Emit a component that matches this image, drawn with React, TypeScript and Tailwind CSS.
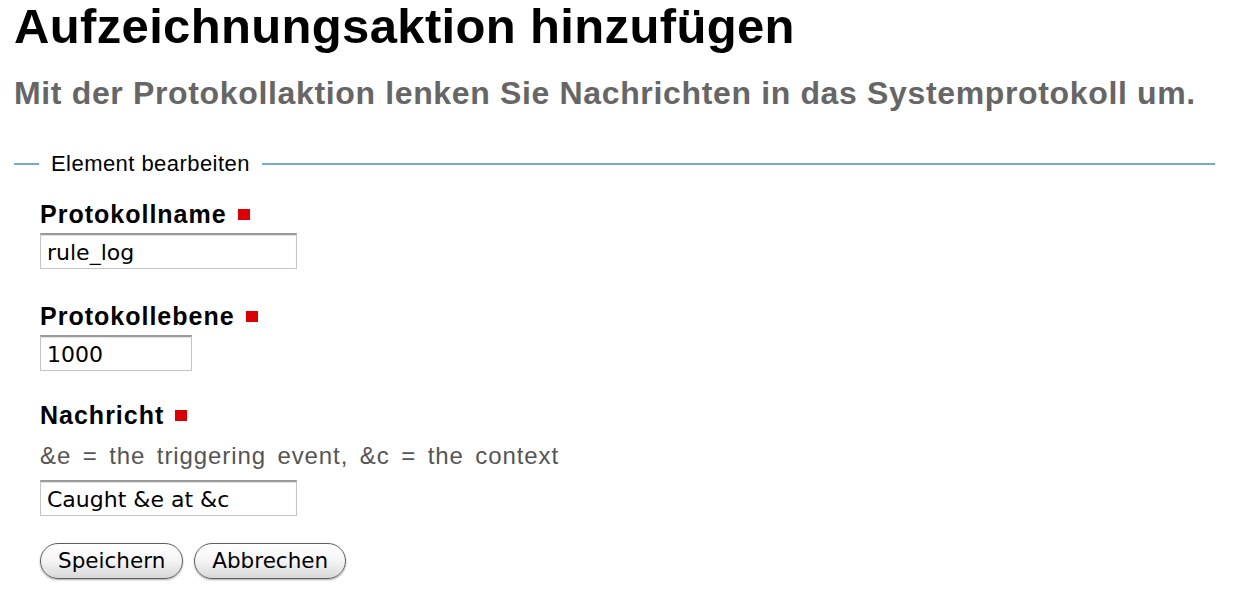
import React, { useState } from 'react';

const labelFont = { fontFamily: '"Liberation Sans", Arial, sans-serif' };
const fieldFont = { fontFamily: '"DejaVu Sans", Verdana, sans-serif' };

function Required() {
  return <span className="ml-[11px] inline-block h-[11px] w-[12px] bg-[#dd0000]" />;
}

function Field({
  label,
  value,
  width,
  onChange,
  help,
  className = '',
}: {
  label: string;
  value: string;
  width: string;
  onChange: (v: string) => void;
  help?: string;
  className?: string;
}) {
  return (
    <div className={`flex flex-col ${className}`}>
      <label className="flex items-center text-[25px] font-bold leading-[28px] tracking-[1px] text-black">
        {label}
        <Required />
      </label>
      {help && (
        <p className="mt-[13px] text-[24px] leading-[28px] tracking-[0.9px] text-[#555] [word-spacing:4px]">{help}</p>
      )}
      <input
        value={value}
        onChange={(e) => onChange(e.target.value)}
        className={`${width} ${help ? 'mt-[10px]' : 'mt-[5px]'} h-[36px] border border-t-2 border-[#c4c4c4] border-t-[#9a9a9a] bg-white px-[6px] pt-[2px] text-[22px] text-black outline-none shadow-[inset_0_1px_1px_rgba(0,0,0,0.12)]`}
        style={fieldFont}
      />
    </div>
  );
}

function AquaButton({ children }: { children: React.ReactNode }) {
  return (
    <button
      type="button"
      className="h-[36px] rounded-full border border-[#5e5e5e] bg-gradient-to-b from-white via-[#f4f4f4] to-[#d8d8d8] px-[17px] text-[21.5px] leading-none text-black shadow-[0_1px_2px_rgba(0,0,0,0.35)]"
      style={fieldFont}
    >
      {children}
    </button>
  );
}

export default function App() {
  const [name, setName] = useState('rule_log');
  const [level, setLevel] = useState('1000');
  const [message, setMessage] = useState('Caught &e at &c');

  return (
    <div className="min-h-screen bg-white pl-[14px] pr-[26px]" style={labelFont}>
      <h1 className="text-[49px] font-bold leading-[52px] tracking-[0.35px] text-black">Aufzeichnungsaktion hinzufügen</h1>
      <h2 className="mt-[23px] text-[32px] font-bold leading-[36px] tracking-[0.65px] text-[#666]">
        Mit der Protokollaktion lenken Sie Nachrichten in das Systemprotokoll um.
      </h2>

      <form className="mt-[40px]">
        <div className="flex h-[26px] items-center">
          <div className="h-[2px] w-[25px] bg-[#74a8dc]" />
          <span className="px-[12px] text-[22px] leading-[26px] tracking-[0.45px] text-black">Element bearbeiten</span>
          <div className="h-[2px] flex-1 bg-[#74a8dc]" />
        </div>

        <div className="flex flex-col pl-[26px] pt-[23px]">
          <Field label="Protokollname" value={name} width="w-[257px]" onChange={setName} />
          <Field className="mt-[33px]" label="Protokollebene" value={level} width="w-[152px]" onChange={setLevel} />
          <Field
            className="mt-[30px]"
            label="Nachricht"
            value={message}
            width="w-[257px]"
            onChange={setMessage}
            help="&e = the triggering event, &c = the context"
          />
        </div>

        <div className="mt-[27px] flex gap-[11px] pl-[26px]">
          <AquaButton>Speichern</AquaButton>
          <AquaButton>Abbrechen</AquaButton>
        </div>
      </form>
    </div>
  );
}
